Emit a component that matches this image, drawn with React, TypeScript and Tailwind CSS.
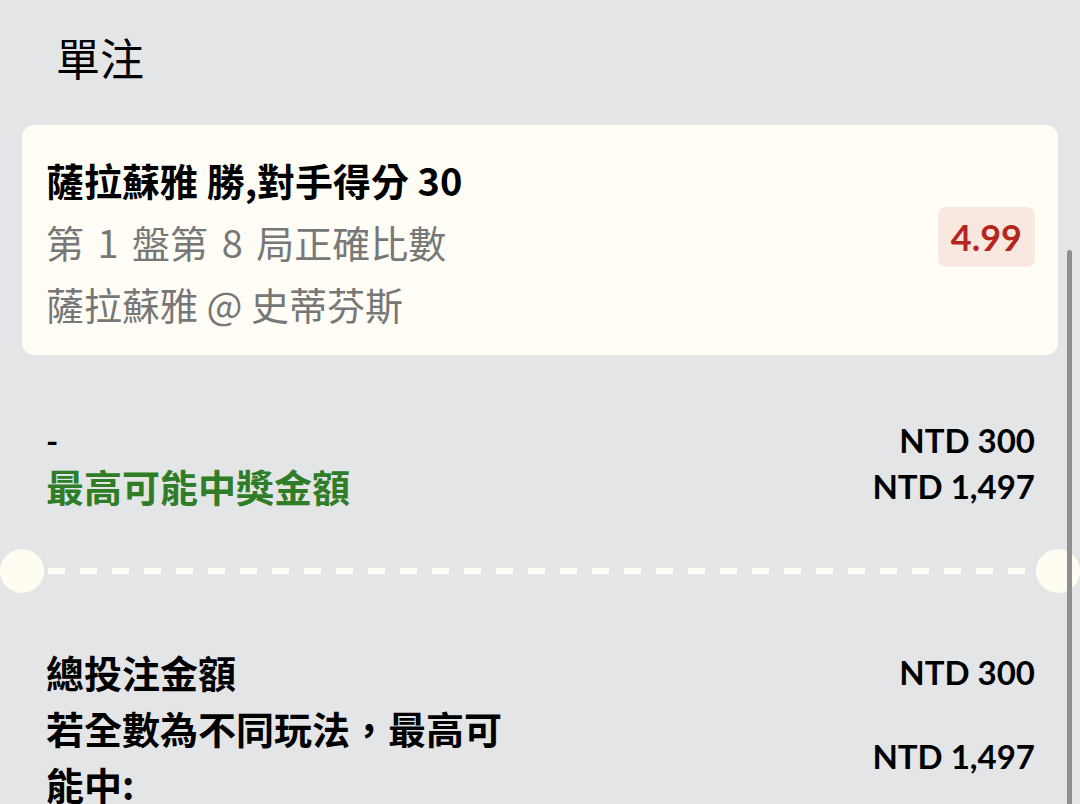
const cjk = "font-['Noto_Sans_CJK_TC',sans-serif]";
const lato = "font-['Lato','Noto_Sans_CJK_TC',sans-serif]";

function Divider() {
  return (
    <div className="flex items-center h-[44px]">
      <div className="w-[44px] h-[44px] rounded-full bg-[#fffdf2] shrink-0" />
      <div className="flex-1 mx-[4px] h-[6px] bg-[repeating-linear-gradient(90deg,#fffdf5_0px,#fffdf5_17px,transparent_17px,transparent_32px)]" />
      <div className="w-[44px] h-[44px] rounded-full bg-[#fffdf2] shrink-0" />
    </div>
  );
}

export default function App() {
  return (
    <div className={`relative w-full h-[804px] overflow-hidden bg-[#e4e5e7] text-black ${cjk}`}>
      {/* header */}
      <div className="h-[125px] pt-[27px] px-[56px] text-[44px] leading-[60px]">單注</div>

      {/* bet card */}
      <div className="mx-[22px] rounded-[12px] bg-[#fffdf5] pl-[24px] pr-[23px] pt-[24px] pb-[20px] flex items-center">
        <div className="flex-1 text-[38px] leading-[62px]">
          <div className="font-bold">薩拉蘇雅 勝,對手得分 30</div>
          <div className="text-[#777777] [word-spacing:5px]">第 1 盤第 8 局正確比數</div>
          <div className="text-[#777777]">薩拉蘇雅 @ 史蒂芬斯</div>
        </div>
        <div className={`mb-[10px] rounded-[8px] bg-[#f9e8e0] px-[13px] h-[60px] flex items-center text-[36px] font-bold text-[#b5261e] ${lato}`}>
          4.99
        </div>
      </div>

      {/* stake + potential win */}
      <div className="mt-[62px] px-[46px] pr-[45px] flex justify-between leading-[46px]">
        <div>
          <div className={`font-bold text-[33px] ${lato}`}>-</div>
          <div className="font-bold text-[38px] text-[#2f7d26]">最高可能中獎金額</div>
        </div>
        <div className={`text-right font-bold text-[33px] ${lato}`}>
          <div>NTD 300</div>
          <div>NTD 1,497</div>
        </div>
      </div>

      <div className="mt-[40px]">
        <Divider />
      </div>

      {/* totals */}
      <div className="mt-[51px] pl-[46px] pr-[45px] flex flex-col leading-[56px]">
        <div className="flex items-center justify-between">
          <div className="font-bold text-[38px]">總投注金額</div>
          <div className={`font-bold text-[33px] ${lato}`}>NTD 300</div>
        </div>
        <div className="flex items-center justify-between">
          <div className="w-[476px] font-bold text-[38px]">若全數為不同玩法，最高可能中:</div>
          <div className={`font-bold text-[33px] ${lato}`}>NTD 1,497</div>
        </div>
      </div>

      {/* scrollbar */}
      <div className="absolute right-[8px] top-[250px] w-[5px] h-[600px] rounded-full bg-[#8e8e93]" />
    </div>
  );
}
